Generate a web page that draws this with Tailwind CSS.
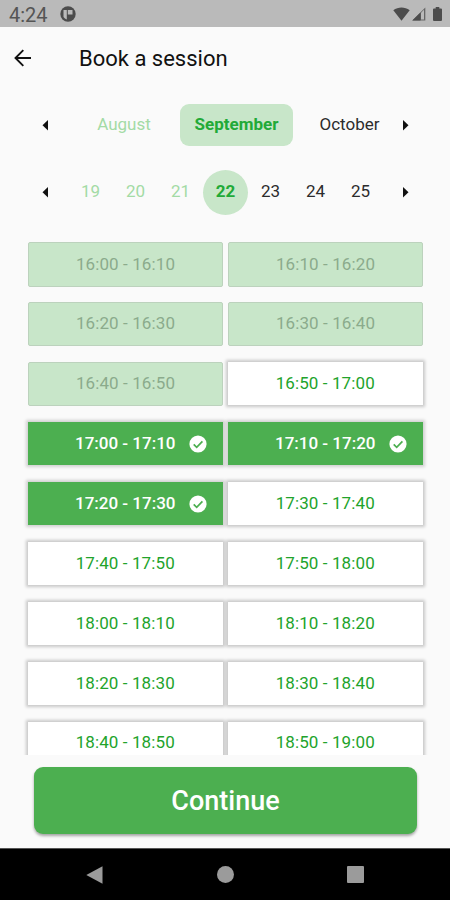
<!DOCTYPE html>
<html lang="en">
<head>
<meta charset="utf-8">
<title>Book a session</title>
<script src="https://cdn.jsdelivr.net/npm/@tailwindcss/browser@4"></script>
</head>
<body class="w-[450px] h-[900px] overflow-hidden bg-[#fafafa] font-[Roboto,sans-serif] flex flex-col text-[#2c2c2c]">
  <div class="h-[27px] shrink-0 bg-[#bababa] flex items-center pl-[9px] pr-[8px] text-[#555]">
    <span class="w-[39px] text-[20px] leading-[27px] pt-[3px]">4:24</span>
    <svg class="ml-[12px] size-[16px]" viewBox="0 0 16 16"><circle cx="8" cy="8" r="7.700" fill="#4c4c4c"/><path d="M3.500 4h3.300v9.400a6 6 0 0 1-3.300-2.400zM7.800 4h4.700v4.400H7.800z" fill="#bababa"/></svg>
    <svg class="ml-auto w-[17px] h-[14px]" viewBox="0 0 17 14"><path d="M.3 3.300C5.200-.4 11.800-.4 16.700 3.300L8.500 13.700z" fill="#4c4c4c"/></svg>
    <svg class="ml-[2px] w-[14px] h-[14px]" viewBox="0 0 14 14"><path d="M.3 13.600L13.300.6v13z" fill="#666"/><path d="M.3 13.600L8.500 5.400v8.200z" fill="#4c4c4c"/><path d="M9 5.800l3-3v9.700H9z" fill="#bababa"/></svg>
    <svg class="ml-[7px] w-[9px] h-[14px]" viewBox="0 0 9 14"><path d="M2.700 0h3.600v1.500H8a1 1 0 0 1 1 1V13a1 1 0 0 1-1 1H1a1 1 0 0 1-1-1V2.500a1 1 0 0 1 1-1h1.700z" fill="#4c4c4c"/></svg>
  </div>

  <header class="h-[62px] shrink-0 flex items-center pl-[14px]">
    <svg class="w-[18px] h-[18px]" viewBox="0 0 18 18" fill="none" stroke="#111" stroke-width="1.900"><path d="M17 9H1.600M9.300 1.200L1.500 9l7.800 7.800"/></svg>
    <h1 class="ml-[47px] pt-[1px] text-[22px] leading-[28px] text-[#111]">Book a session</h1>
  </header>

  <div class="h-[72px] shrink-0 flex items-center pl-[42px] pr-[41px] text-[17px]">
    <svg class="w-[6px] h-[12px]" viewBox="0 0 6 12"><path d="M6 1v10.500L.5 6.300z" fill="#111"/></svg>
    <div class="ml-[20px] w-[112px] text-center text-[#a3dba5]">August</div>
    <div class="w-[113px] h-[42px] rounded-[9px] bg-[#c8e6c9] flex items-center justify-center font-bold text-[#22aa38]">September</div>
    <div class="w-[110px] text-center pl-[3px]">October</div>
    <svg class="w-[6px] h-[12px]" viewBox="0 0 6 12"><path d="M0 1v10.500L5.500 6.300z" fill="#111"/></svg>
  </div>

  <div class="h-[62px] shrink-0 flex items-center pl-[42px] pr-[41px] text-[17px]">
    <svg class="w-[6px] h-[12px]" viewBox="0 0 6 12"><path d="M6 1v10.500L.5 6.300z" fill="#111"/></svg>
    <div class="ml-[20px] w-[315px] grid grid-cols-7 items-center text-center">
      <span class="text-[#a3dba5]">19</span><span class="text-[#a3dba5]">20</span><span class="text-[#a3dba5]">21</span>
      <span class="size-[45px] rounded-full bg-[#c8e6c9] leading-[43px] font-bold text-[#22aa38]">22</span>
      <span>23</span><span>24</span><span>25</span>
    </div>
    <svg class="ml-auto w-[6px] h-[12px]" viewBox="0 0 6 12"><path d="M0 1v10.500L5.500 6.300z" fill="#111"/></svg>
  </div>

  <main id="slots" class="h-[532px] shrink-0 overflow-hidden pt-[19px] pl-[28px] pr-[27px] grid grid-cols-2 gap-x-[5px] auto-rows-[59.9px] content-start text-[17px] tracking-[0.1px]"></main>

  <div class="h-[93px] shrink-0 pt-[12px] pl-[34px] pr-[33px]">
    <button class="block w-full h-[67px] rounded-[9px] bg-[#4caf50] text-white text-[27px] font-medium shadow-[0_2px_3px_rgba(0,0,0,0.35)]"><span class="relative top-px">Continue</span></button>
  </div>

  <nav class="h-[52px] shrink-0 bg-black border-t border-[#555] flex items-center justify-between pl-[86px] pr-[86px] text-[#9b9b9b]">
    <svg class="w-[17px] h-[18px]" viewBox="0 0 17 18"><path d="M16.500.3v17.400L.3 9z" fill="currentColor"/></svg>
    <span class="size-[17px] rounded-full bg-[#9b9b9b]"></span>
    <span class="size-[17px] rounded-[1px] bg-[#9b9b9b]"></span>
  </nav>

  <script>
    const styles = {
      disabled: 'h-[44.5px] flex items-center justify-center rounded-[2px] bg-[#c8e6c9] border border-[#bcd2bd] text-[#8bab8c]',
      free: 'h-[43px] mt-[0.6px] mr-[0.5px] flex items-center justify-center bg-white text-[#22a32b] shadow-[0_0_3px_2px_rgba(0,0,0,0.2)]',
      picked: 'relative h-[43px] mt-[0.6px] mr-[0.5px] flex items-center justify-center bg-[#4caf50] text-white font-medium tracking-[0px] shadow-[0_0_3px_2px_rgba(0,0,0,0.17)]'
    };
    const check = '<svg class="absolute right-[16px] top-[12.5px] size-[18px]" viewBox="0 0 18 18"><circle cx="9" cy="9" r="8.600" fill="#fff"/><path d="M4.700 9.300l3 3 5.700-5.900" fill="none" stroke="#4caf50" stroke-width="1.700"/></svg>';
    const time = m => Math.floor(m / 60) + ':' + String(m % 60).padStart(2, '0');
    const root = document.getElementById('slots');
    for (let i = 0; i < 18; i++) {
      const start = 960 + i * 10;
      const state = i < 5 ? 'disabled' : i > 5 && i < 9 ? 'picked' : 'free';
      const el = document.createElement('div');
      el.className = styles[state];
      el.innerHTML = '<span>' + time(start) + ' - ' + time(start + 10) + '</span>' + (state === 'picked' ? check : '');
      root.appendChild(el);
    }
  </script>
</body>
</html>
